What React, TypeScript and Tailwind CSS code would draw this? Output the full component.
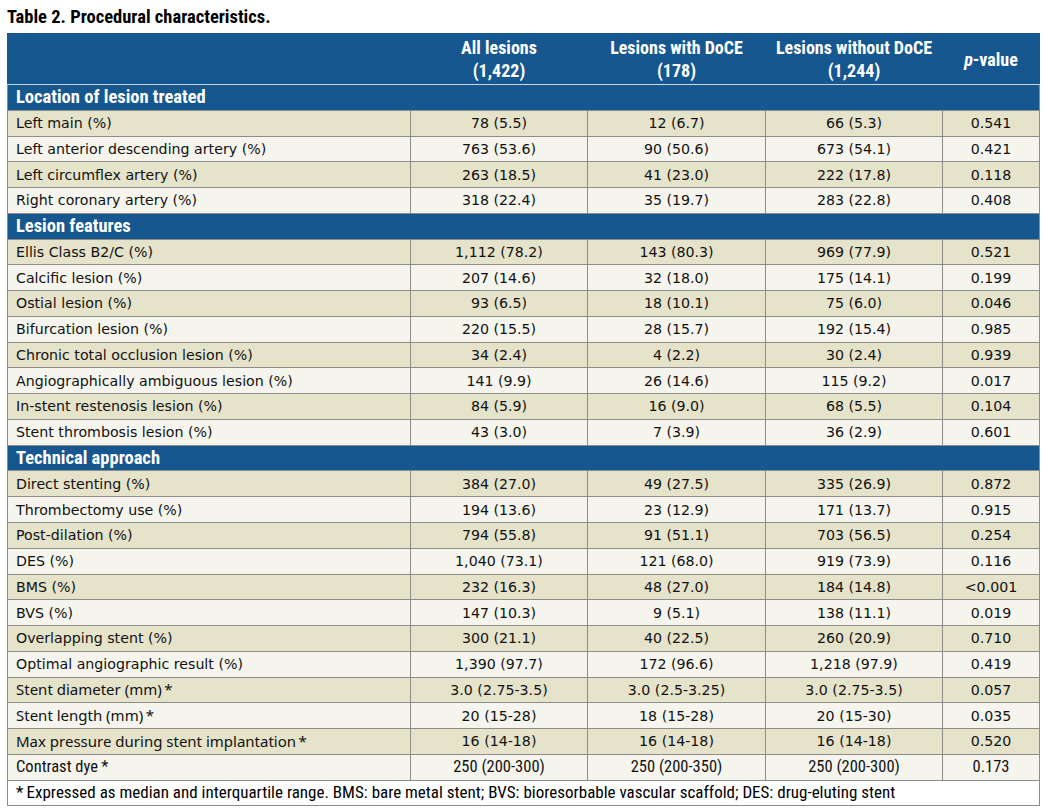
type Row = { label: string; all: string; w: string; wo: string; p: string; font?: string };
type Section = { title: string; rows: Row[] };

const sections: Section[] = [
  {
    title: "Location of lesion treated",
    rows: [
      { label: "Left main (%)", all: "78 (5.5)", w: "12 (6.7)", wo: "66 (5.3)", p: "0.541" },
      { label: "Left anterior descending artery (%)", all: "763 (53.6)", w: "90 (50.6)", wo: "673 (54.1)", p: "0.421" },
      { label: "Left circumflex artery (%)", all: "263 (18.5)", w: "41 (23.0)", wo: "222 (17.8)", p: "0.118" },
      { label: "Right coronary artery (%)", all: "318 (22.4)", w: "35 (19.7)", wo: "283 (22.8)", p: "0.408" },
    ],
  },
  {
    title: "Lesion features",
    rows: [
      { label: "Ellis Class B2/C (%)", all: "1,112 (78.2)", w: "143 (80.3)", wo: "969 (77.9)", p: "0.521" },
      { label: "Calcific lesion (%)", all: "207 (14.6)", w: "32 (18.0)", wo: "175 (14.1)", p: "0.199" },
      { label: "Ostial lesion (%)", all: "93 (6.5)", w: "18 (10.1)", wo: "75 (6.0)", p: "0.046" },
      { label: "Bifurcation lesion (%)", all: "220 (15.5)", w: "28 (15.7)", wo: "192 (15.4)", p: "0.985" },
      { label: "Chronic total occlusion lesion (%)", all: "34 (2.4)", w: "4 (2.2)", wo: "30 (2.4)", p: "0.939" },
      { label: "Angiographically ambiguous lesion (%)", all: "141 (9.9)", w: "26 (14.6)", wo: "115 (9.2)", p: "0.017" },
      { label: "In-stent restenosis lesion (%)", all: "84 (5.9)", w: "16 (9.0)", wo: "68 (5.5)", p: "0.104" },
      { label: "Stent thrombosis lesion (%)", all: "43 (3.0)", w: "7 (3.9)", wo: "36 (2.9)", p: "0.601" },
    ],
  },
  {
    title: "Technical approach",
    rows: [
      { label: "Direct stenting (%)", all: "384 (27.0)", w: "49 (27.5)", wo: "335 (26.9)", p: "0.872" },
      { label: "Thrombectomy use (%)", all: "194 (13.6)", w: "23 (12.9)", wo: "171 (13.7)", p: "0.915" },
      { label: "Post-dilation (%)", all: "794 (55.8)", w: "91 (51.1)", wo: "703 (56.5)", p: "0.254" },
      { label: "DES (%)", all: "1,040 (73.1)", w: "121 (68.0)", wo: "919 (73.9)", p: "0.116" },
      { label: "BMS (%)", all: "232 (16.3)", w: "48 (27.0)", wo: "184 (14.8)", p: "<0.001" },
      { label: "BVS (%)", all: "147 (10.3)", w: "9 (5.1)", wo: "138 (11.1)", p: "0.019" },
      { label: "Overlapping stent (%)", all: "300 (21.1)", w: "40 (22.5)", wo: "260 (20.9)", p: "0.710" },
      { label: "Optimal angiographic result (%)", all: "1,390 (97.7)", w: "172 (96.6)", wo: "1,218 (97.9)", p: "0.419" },
      { label: "Stent diameter (mm)\u2009*", all: "3.0 (2.75-3.5)", w: "3.0 (2.5-3.25)", wo: "3.0 (2.75-3.5)", p: "0.057", font: "alt" },
      { label: "Stent length (mm)\u2009*", all: "20 (15-28)", w: "18 (15-28)", wo: "20 (15-30)", p: "0.035", font: "alt" },
      { label: "Max pressure during stent implantation\u2009*", all: "16 (14-18)", w: "16 (14-18)", wo: "16 (14-18)", p: "0.520", font: "alt" },
      { label: "Contrast dye\u2009*", all: "250 (200-300)", w: "250 (200-350)", wo: "250 (200-300)", p: "0.173", font: "narrow" },
    ],
  },
];

const narrow = "font-['Liberation_Sans_Narrow','Roboto_Condensed','Liberation_Sans',sans-serif]";
const body = "font-['DejaVu_Sans',sans-serif] text-[14.2px]";

function labelFont(f?: string) {
  if (f === "alt") return "font-['Noto_Sans',sans-serif] text-[15px]";
  if (f === "narrow") return narrow + " text-[16.5px]";
  return body;
}

function valueFont(f?: string) {
  if (f === "narrow") return narrow + " text-[16.5px]";
  return body;
}

export default function App() {
  const cell = "border border-[#8c8c8a] h-[25.77px] py-0 leading-none";
  return (
    <div className="w-[1045px] h-[809px] bg-white text-black overflow-hidden">
      <div className={`${narrow} font-bold text-[18.5px] pl-[7px] pt-[6px] h-[33px] leading-[22px]`}>
        Table 2. Procedural characteristics.
      </div>
      <table className="ml-[7px] w-[1032px] border-collapse table-fixed">
        <colgroup>
          <col className="w-[403px]" />
          <col className="w-[177px]" />
          <col className="w-[178px]" />
          <col className="w-[177px]" />
          <col className="w-[97px]" />
        </colgroup>
        <thead>
          <tr className={`bg-[#17578f] text-white ${narrow} font-bold text-[18px] leading-[23px]`}>
            <th className="border border-[#17578f] border-b-[#c8d4e2] h-[51px]"></th>
            <th className="border border-[#17578f] border-l-[#c8d4e2] border-b-[#c8d4e2] font-bold">All lesions<br />(1,422)</th>
            <th className="border border-[#17578f] border-l-[#c8d4e2] border-b-[#c8d4e2] font-bold">Lesions with DoCE<br />(178)</th>
            <th className="border border-[#17578f] border-l-[#c8d4e2] border-b-[#c8d4e2] font-bold">Lesions without DoCE<br />(1,244)</th>
            <th className="border border-[#17578f] border-l-[#c8d4e2] border-b-[#c8d4e2] font-bold">
              <i>p</i>-value
            </th>
          </tr>
        </thead>
        <tbody>
          {sections.map((s) => (
            <SectionRows key={s.title} s={s} cell={cell} />
          ))}
          <tr className="bg-white">
            <td colSpan={5} className={`border border-[#8c8c8a] h-[25px] pl-[8px] ${narrow} text-[17px] leading-none`}>
              *&#8201;Expressed as median and interquartile range. BMS: bare metal stent; BVS: bioresorbable vascular scaffold; DES: drug-eluting stent
            </td>
          </tr>
        </tbody>
      </table>
    </div>
  );
}

function SectionRows({ s, cell }: { s: Section; cell: string }) {
  return (
    <>
      <tr className="bg-[#17578f] text-white">
        <td colSpan={5} className={`h-[25.77px] border border-[#8c8c8a] pl-[8px] ${narrow} font-bold text-[18.5px] leading-none`}>
          {s.title}
        </td>
      </tr>
      {s.rows.map((r, i) => {
        const v = `${cell} text-center ${valueFont(r.font)}`;
        return (
          <tr key={r.label} className={`${i % 2 === 0 ? "bg-[#e6e3cb]" : "bg-[#f5f5ee]"} text-[#111]`}>
            <td className={`${cell} pl-[8px] text-left ${labelFont(r.font)}`}>{r.label}</td>
            <td className={v}>{r.all}</td>
            <td className={v}>{r.w}</td>
            <td className={v}>{r.wo}</td>
            <td className={v}>{r.p}</td>
          </tr>
        );
      })}
    </>
  );
}
